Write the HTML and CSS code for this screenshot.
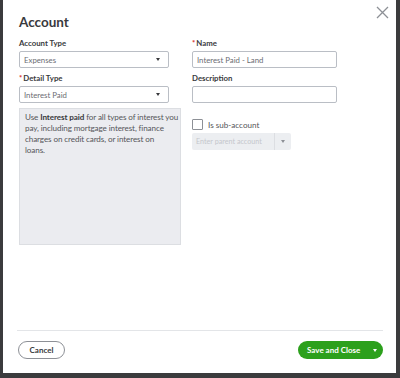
FILE: index.html
```html
<!DOCTYPE html>
<html>
<head>
  <meta charset="UTF-8">
  <title>Account</title>
  <link rel="stylesheet" href="styles.css">
</head>
<body>
  <div class="modal">
    <div class="modal-header">
      <h1 class="title">Account</h1>
      <svg class="close" width="13" height="13" viewBox="0 0 13 13">
        <path d="M1 1 L12 12 M12 1 L1 12" stroke="#8d9096" stroke-width="1.3" fill="none"/>
      </svg>
    </div>

    <div class="modal-body">
      <div class="col-left">
        <div class="form-field">
          <label>Account Type</label>
          <div class="select">
            <span>Expenses</span>
            <span class="caret"></span>
          </div>
        </div>
        <div class="form-field">
          <label><span class="req">*</span>Detail Type</label>
          <div class="select">
            <span>Interest Paid</span>
            <span class="caret"></span>
          </div>
        </div>
        <div class="info-box">
          Use <b>Interest paid</b> for all types of interest you<br>
          pay, including mortgage interest, finance<br>
          charges on credit cards, or interest on<br>
          loans.
        </div>
      </div>

      <div class="col-right">
        <div class="form-field">
          <label><span class="req">*</span>Name</label>
          <div class="input">Interest Paid - Land</div>
        </div>
        <div class="form-field">
          <label>Description</label>
          <div class="input"></div>
        </div>
        <div class="sub-account">
          <span class="checkbox"></span>
          <span>Is sub-account</span>
        </div>
        <div class="parent-select">
          <span class="parent-text">Enter parent account</span>
          <span class="parent-caret"><span class="caret"></span></span>
        </div>
      </div>
    </div>

    <div class="modal-footer">
      <button class="btn-cancel">Cancel</button>
      <button class="btn-save"><span>Save and Close</span> <span class="caret white"></span></button>
    </div>
  </div>
</body>
</html>
```

FILE: styles.css
```css
/* Estilos generales */
body {
  margin: 0;
  background-color: #3b3b3d;
  font-family: Lato, "Open Sans", Arial, sans-serif;
  color: #393a3d;
}

.modal {
  width: 393px;
  height: 373px;
  margin-left: 3px;
  background-color: #fff;
  display: flex;
  flex-direction: column;
  box-sizing: border-box;
}

/* Cabecera */
.modal-header {
  display: flex;
  justify-content: space-between;
  align-items: flex-start;
  padding: 6px 7px 0 16px;
  height: 38px;
  box-sizing: border-box;
}

.title {
  margin: 7px 0 0;
  font-size: 13.5px;
  line-height: 18px;
  font-weight: 700;
  color: #393a3d;
}

/* Cuerpo */
.modal-body {
  flex: 1;
  display: flex;
  padding: 0 16px;
  gap: 11px;
}

.col-left {
  width: 162px;
}

.col-right {
  width: 145px;
}

.form-field {
  margin-bottom: 5px;
}

.form-field label {
  display: block;
  font-size: 7.8px;
  line-height: 11px;
  font-weight: 700;
  margin-bottom: 2px;
}

.req {
  color: #d52b1e;
  margin-right: 1px;
}

.select,
.input {
  height: 17px;
  border: 1px solid #babec5;
  border-radius: 2px;
  box-sizing: border-box;
  display: flex;
  align-items: center;
  justify-content: space-between;
  padding: 0 8px 0 4px;
  font-size: 7.8px;
  color: #6b6c72;
}

.col-left .select {
  width: 150px;
}

.caret {
  width: 0;
  height: 0;
  border-left: 2.5px solid transparent;
  border-right: 2.5px solid transparent;
  border-top: 3px solid #393a3d;
}

.caret.white {
  border-top-color: #fff;
}

.info-box {
  margin-top: 5px;
  height: 137px;
  box-sizing: border-box;
  background-color: #ebecf0;
  border: 1px solid #dcdee2;
  padding: 3px 2px 3px 5px;
  font-size: 8.1px;
  line-height: 11px;
  letter-spacing: -0.1px;
  white-space: nowrap;
  color: #55565a;
}

.info-box b {
  color: #393a3d;
}

/* Sub-cuenta */
.sub-account {
  display: flex;
  align-items: center;
  gap: 5px;
  margin-top: 16px;
  font-size: 8.1px;
  color: #55565a;
}

.checkbox {
  width: 11px;
  height: 11px;
  border: 1px solid #8d9096;
  border-radius: 1px;
  box-sizing: border-box;
}

.parent-select {
  display: flex;
  width: 99px;
  height: 17px;
  margin-top: 3px;
  background-color: #eceef1;
  border-radius: 2px;
}

.parent-text {
  flex: 1;
  font-size: 7.2px;
  line-height: 17px;
  padding-left: 4px;
  color: #c5c7cc;
}

.parent-caret {
  width: 16px;
  border-left: 1px solid #dcdee2;
  display: flex;
  align-items: center;
  justify-content: center;
}

.parent-caret .caret {
  border-top-color: #8d9096;
}

/* Pie */
.modal-footer {
  margin: 0 13px 0 14px;
  border-top: 1px solid #e3e5e8;
  height: 43px;
  display: flex;
  justify-content: space-between;
  align-items: flex-start;
  padding: 10px 0 0 1px;
  box-sizing: border-box;
}

.btn-cancel,
.btn-save {
  height: 18px;
  border-radius: 10px;
  font-family: Lato, "Open Sans", Arial, sans-serif;
  font-size: 8px;
  font-weight: 700;
  display: flex;
  align-items: center;
  box-sizing: border-box;
  white-space: nowrap;
}

.btn-cancel {
  width: 47px;
  justify-content: center;
  background-color: #fff;
  border: 1px solid #8d9096;
  color: #393a3d;
}

.btn-save {
  width: 85px;
  padding: 0 6px 0 9px;
  justify-content: space-between;
  background-color: #2ca01c;
  border: none;
  color: #fff;
}
```
